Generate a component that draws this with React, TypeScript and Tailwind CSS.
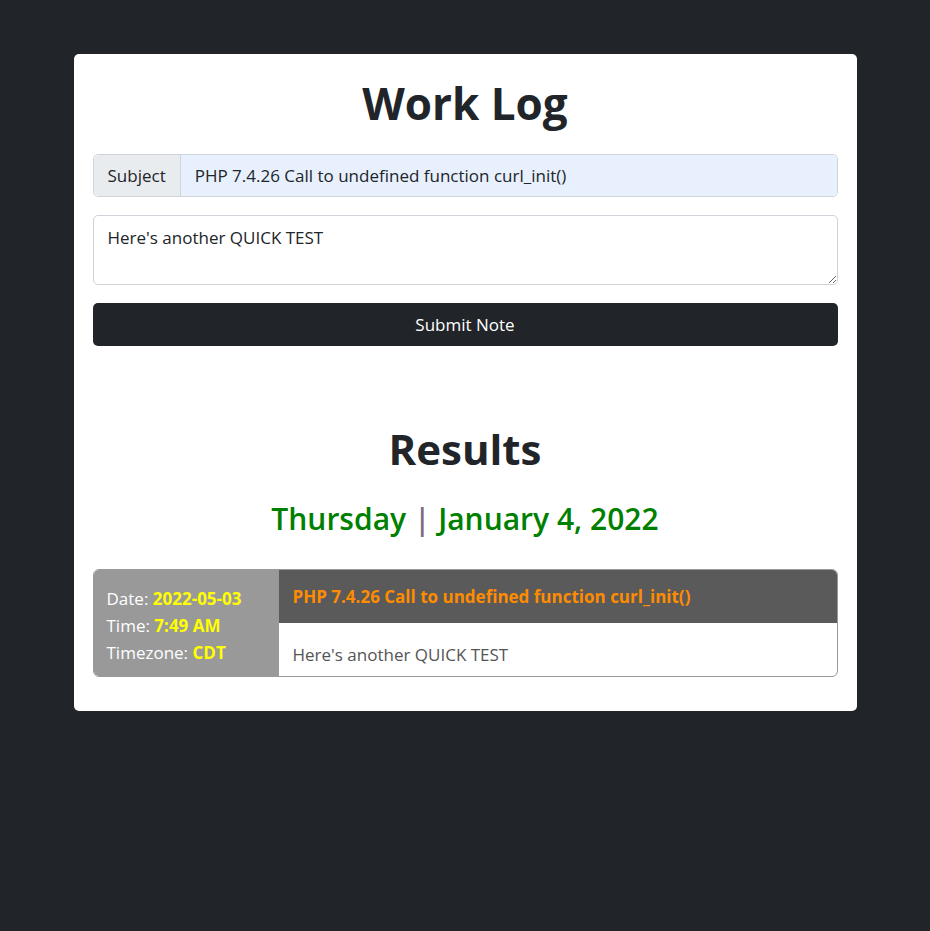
import { useState } from "react"

const font = { fontFamily: '"Open Sans", "Noto Sans", Arial, sans-serif' }

export default function App() {
  const [subject, setSubject] = useState("PHP 7.4.26 Call to undefined function curl_init()")
  const [note, setNote] = useState("Here's another QUICK TEST")

  return (
    <div style={font} className="min-h-[931px] bg-[#212529] pt-[54px] text-[#212529]">
      <div className="mx-auto w-[783px] rounded-[5px] bg-white px-[19px] pb-[34px]">
        <h1 className="pt-[22px] pb-[23px] text-center text-[44px] font-bold leading-[55px]">Work Log</h1>

        <div className="flex h-[43px] rounded-[5px] border border-[#ced4da]">
          <span className="flex items-center rounded-l-[5px] border-r border-[#ced4da] bg-[#e9ecef] px-[14px] text-[17px]">
            Subject
          </span>
          <input
            value={subject}
            onChange={(e) => setSubject(e.target.value)}
            className="flex-1 rounded-r-[5px] bg-[#e8f0fe] px-[14px] text-[17px] outline-none"
          />
        </div>

        <textarea
          value={note}
          onChange={(e) => setNote(e.target.value)}
          className="mt-[18px] block h-[70px] w-full rounded-[5px] border border-[#ced4da] px-[14px] py-[10px] text-[17px] leading-[24px] outline-none"
        />

        <button className="mt-[18px] block h-[43px] w-full rounded-[5px] bg-[#212529] text-[17px] text-white">
          Submit Note
        </button>

        <h1 className="mt-[75px] text-center text-[42px] font-bold leading-[55px]">Results</h1>
        <h2 className="mt-[24px] text-center text-[30px] font-semibold leading-[37px] text-[#008000]">
          Thursday <span className="text-[#7d6b86]">|</span> January 4, 2022
        </h2>

        <div className="mt-[32px] flex h-[108px] overflow-hidden rounded-[6px] border border-[#999]">
          <div className="flex w-[185px] flex-col justify-end bg-[#999] px-[13px] pb-[10px] text-[17px] leading-[27px] text-white">
            <div>
              Date: <b className="text-[#ffff00]">2022-05-03</b>
            </div>
            <div>
              Time: <b className="text-[#ffff00]">7:49 AM</b>
            </div>
            <div>
              Timezone: <b className="text-[#ffff00]">CDT</b>
            </div>
          </div>
          <div className="flex flex-1 flex-col">
            <div className="flex h-[53px] items-center bg-[#5a5a5a] px-[14px] text-[17px] font-bold text-[#ff8c00]">
              PHP 7.4.26 Call to undefined function curl_init()
            </div>
            <div className="flex flex-1 items-center px-[14px] pt-[10px] text-[17px] text-[#555]">
              Here's another QUICK TEST
            </div>
          </div>
        </div>
      </div>
    </div>
  )
}
